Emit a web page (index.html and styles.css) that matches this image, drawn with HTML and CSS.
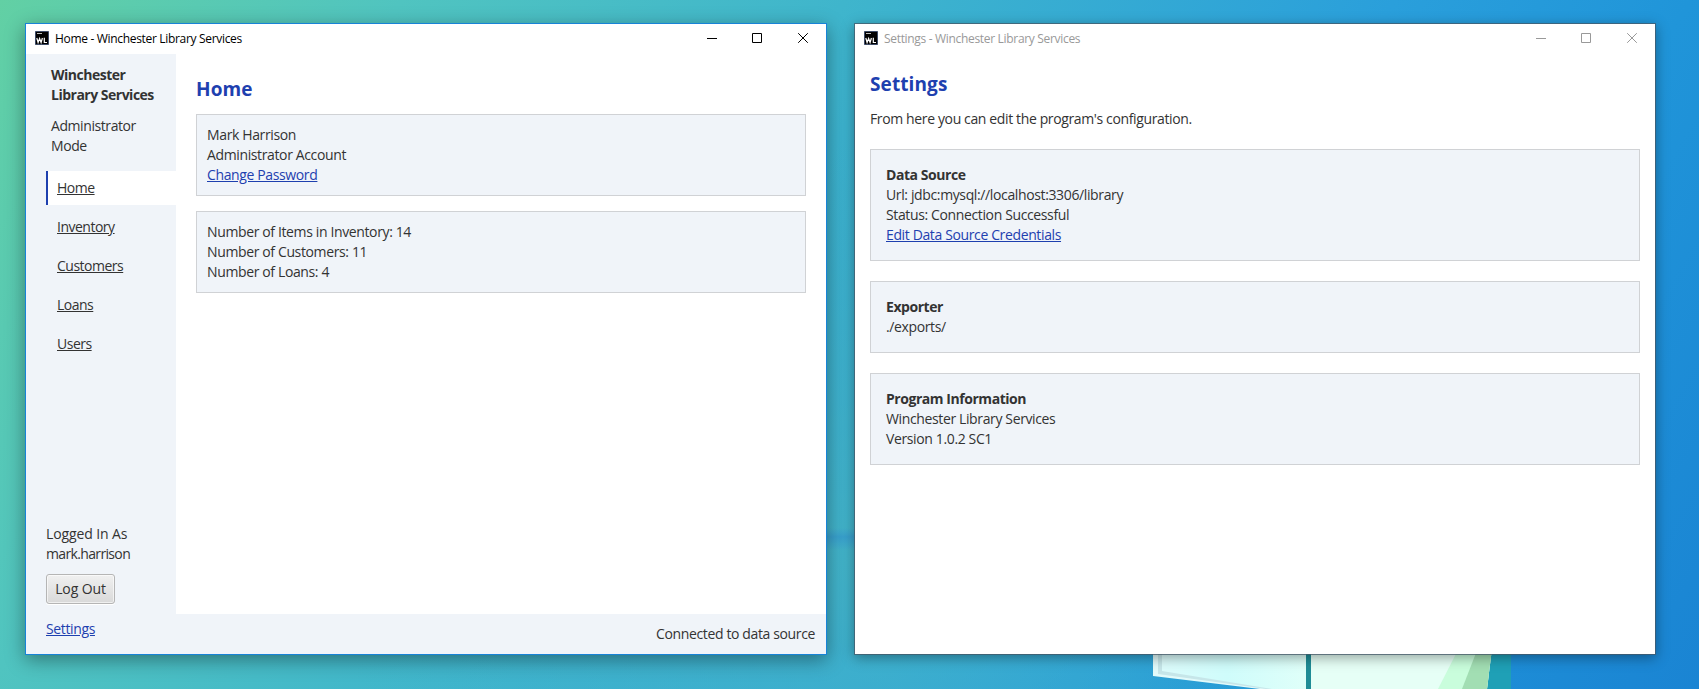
FILE: index.html
```html
<!DOCTYPE html>
<html lang="en">
<head>
<meta charset="utf-8">
<title>Winchester Library Services</title>
<link rel="stylesheet" href="styles.css">
</head>
<body>
<svg class="wallpaper" width="1699" height="689" viewBox="0 0 1699 689">
  <defs>
    <linearGradient id="pane" x1="0" x2="1"><stop offset="0" stop-color="#dcfcfc"/><stop offset=".45" stop-color="#cffcfb"/><stop offset="1" stop-color="#dffff9"/></linearGradient>
    <linearGradient id="band" x1="0" y1="0" x2="0" y2="1"><stop offset="0" stop-color="#3a9dd0" stop-opacity="0"/><stop offset=".4" stop-color="#379fce" stop-opacity=".9"/><stop offset="1" stop-color="#3a9dd0" stop-opacity="0"/></linearGradient>
  </defs>
  <rect x="820" y="528" width="40" height="22" fill="url(#band)"/>
  <path d="M1493 640h18v49h-24z" fill="#1fa0b6"/>
  <path d="M1153 640h153v49h-46l-107-13z" fill="#e2fafa"/>
  <path d="M1158 640h148v49h-40l-108-15z" fill="#c6e6e9"/>
  <path d="M1162 640h144v49h-34l-110-18z" fill="url(#pane)"/>
  <path d="M1306 640h5v49h-5z" fill="#1f8c96"/>
  <path d="M1311 640h182l-6 49h-176z" fill="#e6fff6"/>
  <path d="M1463 640h30l-6 49h-49z" fill="#c9fddc"/>
  <path d="M1481 640h12l-6 49h-25z" fill="#a2deb3"/>
</svg>
<main class="desktop">
  <section class="window active">
    <header class="titlebar">
      <svg class="app-icon" width="14" height="14" viewBox="0 0 14 14"><path fill="#000" stroke="#3c4a66" d="M.5.5h13v13H.5z"/><path stroke="#bbb" d="M2 2.500h5"/><path fill="none" stroke="#fff" stroke-width="1.200" d="M1.800 7l1.300 4.500 1.500-4 1.500 4L7.400 7M9.300 6.800v4.700H12"/></svg>
      <span class="title">Home - Winchester Library Services</span>
      <svg class="controls" width="102" height="12" viewBox="0 0 102 12" fill="none" stroke="currentColor"><path d="M0 6.500h10M45.500 1.500h9v9h-9z"/><path d="M91.200 1.200l9.600 9.600M100.800 1.200l-9.600 9.600"/></svg>
    </header>
    <div class="app">
      <aside class="sidebar">
        <div class="brand">Winchester<br>Library Services</div>
        <div class="mode">Administrator<br>Mode</div>
        <nav class="nav">
          <a class="nav-item current"><u>Home</u></a>
          <a class="nav-item"><u>Inventory</u></a>
          <a class="nav-item"><u>Customers</u></a>
          <a class="nav-item"><u>Loans</u></a>
          <a class="nav-item"><u>Users</u></a>
        </nav>
        <div class="account">
          <div class="caption">Logged In As</div>
          <div class="username">mark.harrison</div>
          <button class="logout">Log Out</button>
          <a class="link">Settings</a>
        </div>
      </aside>
      <div class="content">
        <div class="home">
          <h1>Home</h1>
          <div class="card">
            <div>Mark Harrison</div>
            <div>Administrator Account</div>
            <a class="link">Change Password</a>
          </div>
          <div class="card">
            <div>Number of Items in Inventory: 14</div>
            <div>Number of Customers: 11</div>
            <div>Number of Loans: 4</div>
          </div>
        </div>
        <footer class="status">Connected to data source</footer>
      </div>
    </div>
  </section>
  <section class="window inactive">
    <header class="titlebar">
      <svg class="app-icon" width="14" height="14" viewBox="0 0 14 14"><path fill="#000" stroke="#3c4a66" d="M.5.5h13v13H.5z"/><path stroke="#bbb" d="M2 2.500h5"/><path fill="none" stroke="#fff" stroke-width="1.200" d="M1.800 7l1.300 4.500 1.500-4 1.500 4L7.400 7M9.300 6.800v4.700H12"/></svg>
      <span class="title">Settings - Winchester Library Services</span>
      <svg class="controls" width="102" height="12" viewBox="0 0 102 12" fill="none" stroke="currentColor"><path d="M0 6.500h10M45.500 1.500h9v9h-9z"/><path d="M91.200 1.200l9.600 9.600M100.800 1.200l-9.600 9.600"/></svg>
    </header>
    <div class="settings">
      <h1>Settings</h1>
      <p class="intro">From here you can edit the program's configuration.</p>
      <div class="card">
        <h2>Data Source</h2>
        <div>Url: jdbc:mysql://localhost:3306/library</div>
        <div>Status: Connection Successful</div>
        <a class="link">Edit Data Source Credentials</a>
      </div>
      <div class="card">
        <h2>Exporter</h2>
        <div>./exports/</div>
      </div>
      <div class="card">
        <h2>Program Information</h2>
        <div>Winchester Library Services</div>
        <div>Version 1.0.2 SC1</div>
      </div>
    </div>
  </section>
</main>
</body>
</html>
```

FILE: styles.css
```css
* { box-sizing: border-box; }
body {
  margin: 0;
  width: 1699px;
  height: 689px;
  overflow: hidden;
  background:
    radial-gradient(ellipse 520px 420px at 850px 560px, rgba(70, 182, 198, .8), rgba(64, 172, 208, 0)),
    linear-gradient(121deg, #62d0a4 0%, #50c4c0 19%, #3fb5cc 40%, #2a9fdb 66%, #2095d9 80%, #1a84d3 100%);
  font: 14px/20px "Open Sans", "Noto Sans", sans-serif;
  letter-spacing: -.37px;
  color: #333;
}
.wallpaper { position: absolute; left: 0; top: 0; }
.desktop { position: relative; display: flex; gap: 27px; padding: 23px 0 0 25px; }
.window {
  display: flex;
  flex-direction: column;
  width: 802px;
  height: 632px;
  border: 1px solid #1883d7;
  background: #fff;
  background-clip: padding-box;
}
.active { box-shadow: 0 5px 18px rgba(0, 0, 0, .38); }
.inactive { border-color: rgba(70, 90, 105, .75); box-shadow: 0 3px 12px rgba(0, 0, 0, .35); }
.titlebar { display: flex; align-items: center; height: 30px; flex: none; padding: 0 17px 2px 9px; font-size: 12px; color: #000; }
.inactive .titlebar { color: #999; }
.title { margin: 2px 0 0 6px; letter-spacing: -.32px; }
.controls { margin-left: auto; }
.app { display: flex; flex: 1; }
.sidebar { display: flex; flex-direction: column; width: 150px; padding: 11px 0 0 20px; background: #f0f4f9; }
.brand { padding-left: 5px; font-weight: 700; letter-spacing: -.5px; }
.mode { padding: 11px 0 0 5px; letter-spacing: -.42px; }
.nav { display: flex; flex-direction: column; gap: 5px; margin-top: 15px; letter-spacing: -.5px; }
.nav-item { height: 34px; padding: 7px 9px; border-left: 2px solid transparent; }
.current { background: #fff; border-color: #1e40af; }
.account { display: flex; flex-direction: column; align-items: flex-start; margin-top: auto; padding-bottom: 15px; }
.caption { letter-spacing: -.12px; }
.username { letter-spacing: -.65px; }
.logout { width: 69px; height: 30px; margin: 10px 0 15px; padding: 0; border: 1px solid #b5b5b5; border-radius: 3px; background: linear-gradient(#f0f0f0, #d9d9d9); box-shadow: inset 0 0 0 1px rgba(255, 255, 255, .6), 0 1px 0 #fff; font: inherit; letter-spacing: -.1px; color: #333; }
.link { color: #1e40af; text-decoration: underline; }
.content { display: flex; flex: 1; flex-direction: column; }
.home { display: flex; flex: 1; flex-direction: column; gap: 15px; padding: 20px 20px 0; }
.home h1 { margin-bottom: -5px; }
h1 { margin: 0; font-size: 19px; line-height: 30px; letter-spacing: .1px; color: #1e40af; }
h2 { margin: 0; font-size: 14px; line-height: 20px; letter-spacing: -.45px; }
.card { padding: 10px; border: 1px solid #d0d2d5; background: #f0f4f9; }
.status { height: 40px; padding: 10px 11px; background: #f0f4f9; text-align: right; }
.settings { display: flex; flex-direction: column; gap: 20px; padding: 15px 15px 0; }
.settings .card { padding: 15px; }
.intro { margin: -10px 0 0; }
```
